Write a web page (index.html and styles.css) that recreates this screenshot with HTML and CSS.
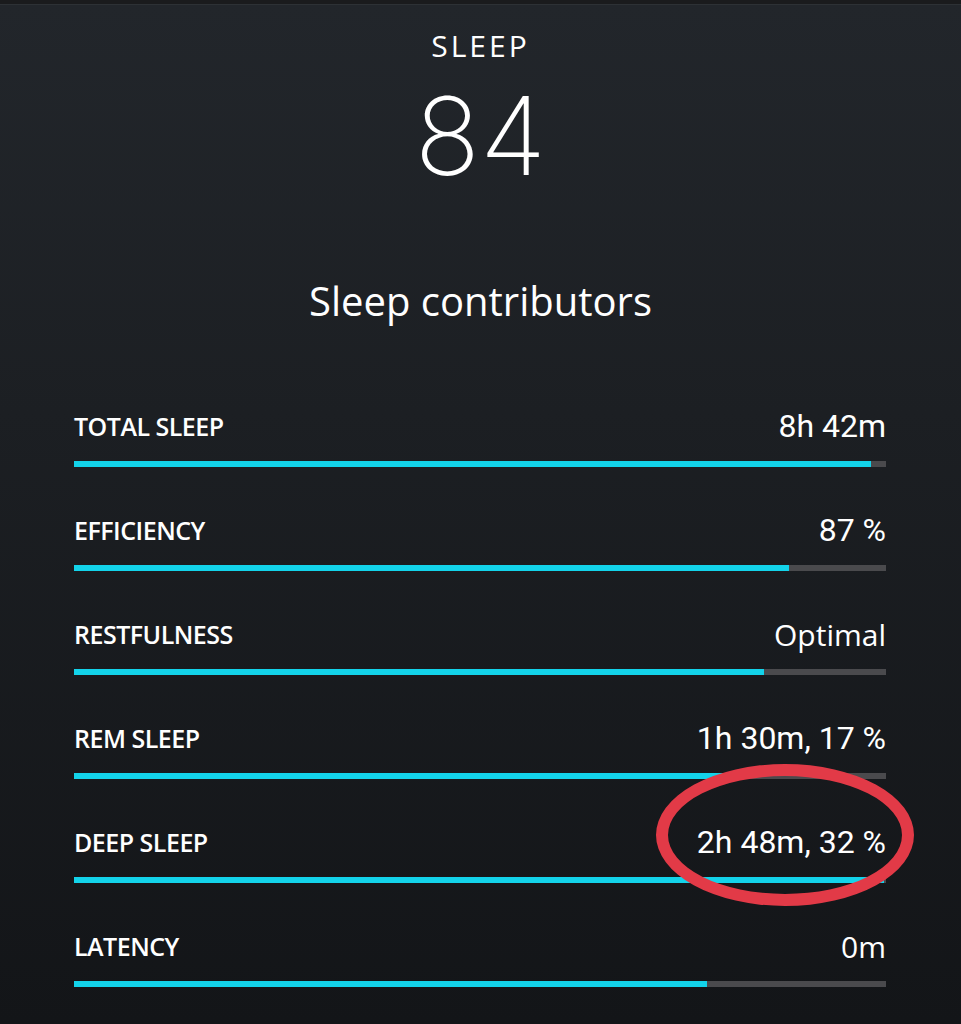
FILE: index.html
```html
<!DOCTYPE html>
<html lang="en">
<head>
    <meta charset="UTF-8" />
    <title>Sleep</title>
    <link rel="stylesheet" href="styles.css">
</head>
<body>
    <div class="topbar"></div>
    <div class="screen">
        <div class="header">
            <div class="title">SLEEP</div>
            <div class="score">84</div>
            <div class="subtitle">Sleep contributors</div>
        </div>

        <div class="list">
            <div class="row">
                <div class="row-text"><span class="label">TOTAL SLEEP</span><span class="value">8h 42m</span></div>
                <div class="bar"><div class="fill" style="width: 98.2%"></div></div>
            </div>
            <div class="row">
                <div class="row-text"><span class="label">EFFICIENCY</span><span class="value">87 %</span></div>
                <div class="bar"><div class="fill" style="width: 88%"></div></div>
            </div>
            <div class="row">
                <div class="row-text"><span class="label">RESTFULNESS</span><span class="value value-alt">Optimal</span></div>
                <div class="bar"><div class="fill" style="width: 85%"></div></div>
            </div>
            <div class="row">
                <div class="row-text"><span class="label">REM SLEEP</span><span class="value">1h 30m, 17 %</span></div>
                <div class="bar"><div class="fill" style="width: 82%"></div></div>
            </div>
            <div class="row highlight">
                <div class="row-text"><span class="label">DEEP SLEEP</span><span class="value">2h 48m, 32 %</span></div>
                <div class="bar"><div class="fill" style="width: 99.8%"></div></div>
                <div class="circle"></div>
            </div>
            <div class="row">
                <div class="row-text"><span class="label">LATENCY</span><span class="value value-alt">0m</span></div>
                <div class="bar"><div class="fill" style="width: 78%"></div></div>
            </div>
        </div>
    </div>
</body>
</html>
```

FILE: styles.css
```css
* {
    margin: 0;
    padding: 0;
    box-sizing: border-box;
}
body {
    width: 961px;
    height: 1024px;
    overflow: hidden;
    background: #131518;
    color: #fff;
    font-family: "Open Sans", sans-serif;
}
.topbar {
    height: 5px;
    background: #1a1b1d;
    border-bottom: 1px solid #2d3135;
}
.screen {
    height: 1018px;
    background: linear-gradient(to bottom, #22262b 0%, #1c1f23 40%, #131518 100%);
}
.header {
    display: flex;
    flex-direction: column;
    align-items: center;
}
.title {
    margin-top: 23px;
    font-family: "Open Sans", sans-serif;
    font-size: 30px;
    letter-spacing: 3px;
    line-height: 36px;
}
.score {
    margin-top: 16px;
    font-family: Inter, sans-serif;
    font-weight: 200;
    font-size: 108px;
    line-height: 112px;
}
.subtitle {
    margin-top: 84px;
    font-family: "Open Sans", sans-serif;
    font-size: 40px;
    line-height: 50px;
}
.list {
    margin-top: 80px;
    padding: 0 75px 0 74px;
    display: flex;
    flex-direction: column;
    gap: 43px;
}
.row {
    position: relative;
}
.row-text {
    display: flex;
    justify-content: space-between;
    align-items: center;
    height: 40px;
}
.label {
    font-family: "Open Sans", sans-serif;
    font-weight: 600;
    font-size: 25px;
    letter-spacing: -0.5px;
}
.value {
    font-family: Roboto, sans-serif;
    font-size: 32px;
}
.value-alt {
    font-family: "Open Sans", sans-serif;
    font-size: 30px;
}
.bar {
    margin-top: 15px;
    height: 6px;
    background: #4a4a4d;
}
.fill {
    height: 100%;
    background: #13d3ea;
}

/* red marker drawn over the deep sleep value */
.circle {
    position: absolute;
    right: -28px;
    top: -58px;
    width: 258px;
    height: 142px;
    border: 12px solid #e23a47;
    border-radius: 50%;
}
```
